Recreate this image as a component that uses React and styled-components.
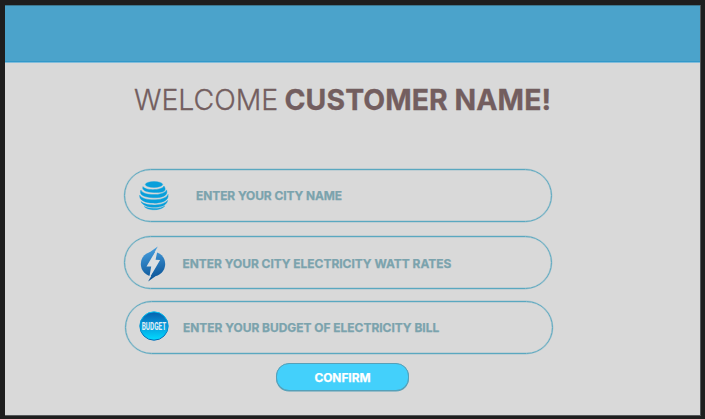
import React from "react";
import styled, { createGlobalStyle } from "styled-components";

const GlobalStyle = createGlobalStyle`
  *, *::before, *::after { box-sizing: border-box; }
  body { margin: 0; background: #1e1e1e; font-family: Inter, sans-serif; }
`;

const Page = styled.div`
  width: 705px;
  height: 419px;
  padding: 5px 4px 3px 5px;
  overflow: hidden;
`;

const Screen = styled.main`
  display: flex;
  flex-direction: column;
  height: 411px;
  background: #d9d9d9;
  border: 1px solid #53575a;
  border-width: 0 1px 1px 0;
`;

const TopBar = styled.header`
  height: 58px;
  flex: none;
  background: #4ba3cb;
  border-top: 1px solid #3c778f;
  border-bottom: 1px solid #82bddb;
  box-shadow: inset 0 -1px #3298c9;
`;

const Title = styled.h1`
  margin: 19px 0 0 129px;
  height: 36px;
  line-height: 36px;
  font-size: 28.4px;
  font-weight: 350;
  color: #735e5f;
  white-space: nowrap;
  -webkit-text-stroke: 0.3px #735e5f;
`;

const TitleName = styled.strong`
  margin-left: -1.7px;
  font-weight: 700;
  letter-spacing: 0.08px;
`;

const Form = styled.form`
  display: flex;
  flex-direction: column;
  margin: 51px 0 0 119px;
`;

const Field = styled.label`
  display: flex;
  align-items: center;
  width: 428px;
  height: 53px;
  flex: none;
  margin: 0 0 ${(p) => p.$gap}px ${(p) => p.$indent || 0}px;
  padding-left: 14px;
  border: 1px solid #5aa8c0;
  border-radius: 27px;
  box-shadow: 0 0 0 0.4px #5aa8c066, inset 0 0 0 0.4px #5aa8c066;
`;

const IconSlot = styled.span`
  display: flex;
  width: 30px;
  height: 36px;
  flex: none;
  align-items: center;
  justify-content: center;
  margin-top: ${(p) => p.$shift || 0}px;
  margin-left: ${(p) => p.$nudge || 0}px;

  svg { display: block; overflow: visible; }
`;

const FieldText = styled.span`
  margin-left: ${(p) => p.$space}px;
  margin-top: ${(p) => p.$drop || 0}px;
  font-size: 11.95px;
  line-height: 16px;
  font-weight: 700;
  letter-spacing: ${(p) => p.$tracking || 0}px;
  color: #7ba3ad;
  white-space: nowrap;
  -webkit-text-stroke: 0.25px #7ba3ad;
`;

const ConfirmButton = styled.button`
  width: 133px;
  height: 28px;
  margin-left: 152px;
  padding: 1px 0 0;
  border: 1px solid #56a0b8;
  border-radius: 13px;
  background: #43d0fb;
  color: #fff;
  font: 700 11.9px/16px Inter, sans-serif;
  -webkit-text-stroke: 0.25px #fff;
  box-shadow: 0 0.5px #56a0b8;
`;

const GlobeIcon = () => (
  <svg width="30" height="30" viewBox="0 0 30 30" fill="#079fdb" stroke="#079fdb" strokeWidth="0.4">
    <ellipse cx="15" cy="3.5" rx="8.7" ry="2.9" />
    <path d="M4 5.6C5.5 9.7 22.5 9.9 25 5C29 11.2 22 11.7 14.8 11.5C8 11.3 2.2 9.6 4 5.6Z" />
    <path d="M1.9 9C3 14.6 24.5 15.7 27.6 8.9C30 15.8 20 17.2 14 16.8C6 16.3-.4 14.3 1.9 9Z" />
    <path d="M.7 14.2C3.5 20.4 26.5 20.6 29.1 13.4C30.3 20.8 20 22.4 13.8 22.1C6.5 21.8 0 19.5.7 14.2Z" />
    <path d="M2 20.6C7 25.4 24.4 25.2 28.6 19.4C27.8 25 19.5 26.7 13 26.3C8 26 3.5 24 2 20.6Z" />
    <path d="M5.3 25.6C10.5 28.3 21.6 28 25.9 24.9C22.6 28.4 17.5 28.9 13.5 28.7C10 28.5 7 27.5 5.3 25.6Z" />
  </svg>
);

const BoltIcon = () => (
  <svg width="26" height="36" viewBox="0 0 26 36">
    <defs>
      <linearGradient id="boltFill" x1="10" y1="4" x2="16" y2="32" gradientUnits="userSpaceOnUse">
        <stop stopColor="#4299d9" />
        <stop offset="1" stopColor="#0d5699" />
      </linearGradient>
    </defs>
    <circle cx="13" cy="18" r="12.2" fill="url(#boltFill)" />
    <path d="M16.8 3L6.5 20.4L11.2 20.6L9 33L20.1 13.9L15.6 13.7L17.6 4Z" fill="#dcdfe1" />
    <path d="M17.8 .4L9 6.8L12.8 9.2Z" fill="url(#boltFill)" />
    <path d="M8.1 35.6L16.9 29.3L13.1 26.8Z" fill="url(#boltFill)" />
  </svg>
);

const BudgetIcon = () => (
  <svg width="30" height="30" viewBox="0 0 30 30">
    <defs>
      <linearGradient id="budgetFill" x1="0" y1="0" x2="0" y2="1">
        <stop stopColor="#065fac" />
        <stop offset="0.5" stopColor="#079bdc" />
        <stop offset="1" stopColor="#02dcff" />
      </linearGradient>
      <linearGradient id="budgetRing" x1="0" y1="0" x2="0" y2="1">
        <stop stopColor="#05c5f3" />
        <stop offset="1" stopColor="#0865b2" />
      </linearGradient>
    </defs>
    <circle cx="15" cy="15" r="14.2" fill="url(#budgetFill)" stroke="url(#budgetRing)" />
    <text x="15" y="18.9" textAnchor="middle" textLength="24.5" lengthAdjust="spacingAndGlyphs"
      fontFamily="Roboto, sans-serif" fontWeight="700" fontSize="11" fill="#e0eef5">BUDGET</text>
  </svg>
);

export default function App() {
  return (
    <>
      <GlobalStyle />
      <Page>
        <Screen>
          <TopBar />
          <Title>WELCOME <TitleName>CUSTOMER NAME!</TitleName></Title>
          <Form>
            <Field $gap={14}>
              <IconSlot><GlobeIcon /></IconSlot>
              <FieldText $space={27} $drop={1} $tracking={-0.06}>ENTER YOUR CITY NAME</FieldText>
            </Field>
            <Field $gap={12}>
              <IconSlot $shift={2} $nudge={-1}><BoltIcon /></IconSlot>
              <FieldText $space={14.5} $drop={2}>ENTER YOUR CITY ELECTRICITY WATT RATES</FieldText>
            </Field>
            <Field $gap={9} $indent={1}>
              <IconSlot $shift={-4} $nudge={-1}><BudgetIcon /></IconSlot>
              <FieldText $space={14} $drop={1}>ENTER YOUR BUDGET OF ELECTRICITY BILL</FieldText>
            </Field>
            <ConfirmButton type="button">CONFIRM</ConfirmButton>
          </Form>
        </Screen>
      </Page>
    </>
  );
}
